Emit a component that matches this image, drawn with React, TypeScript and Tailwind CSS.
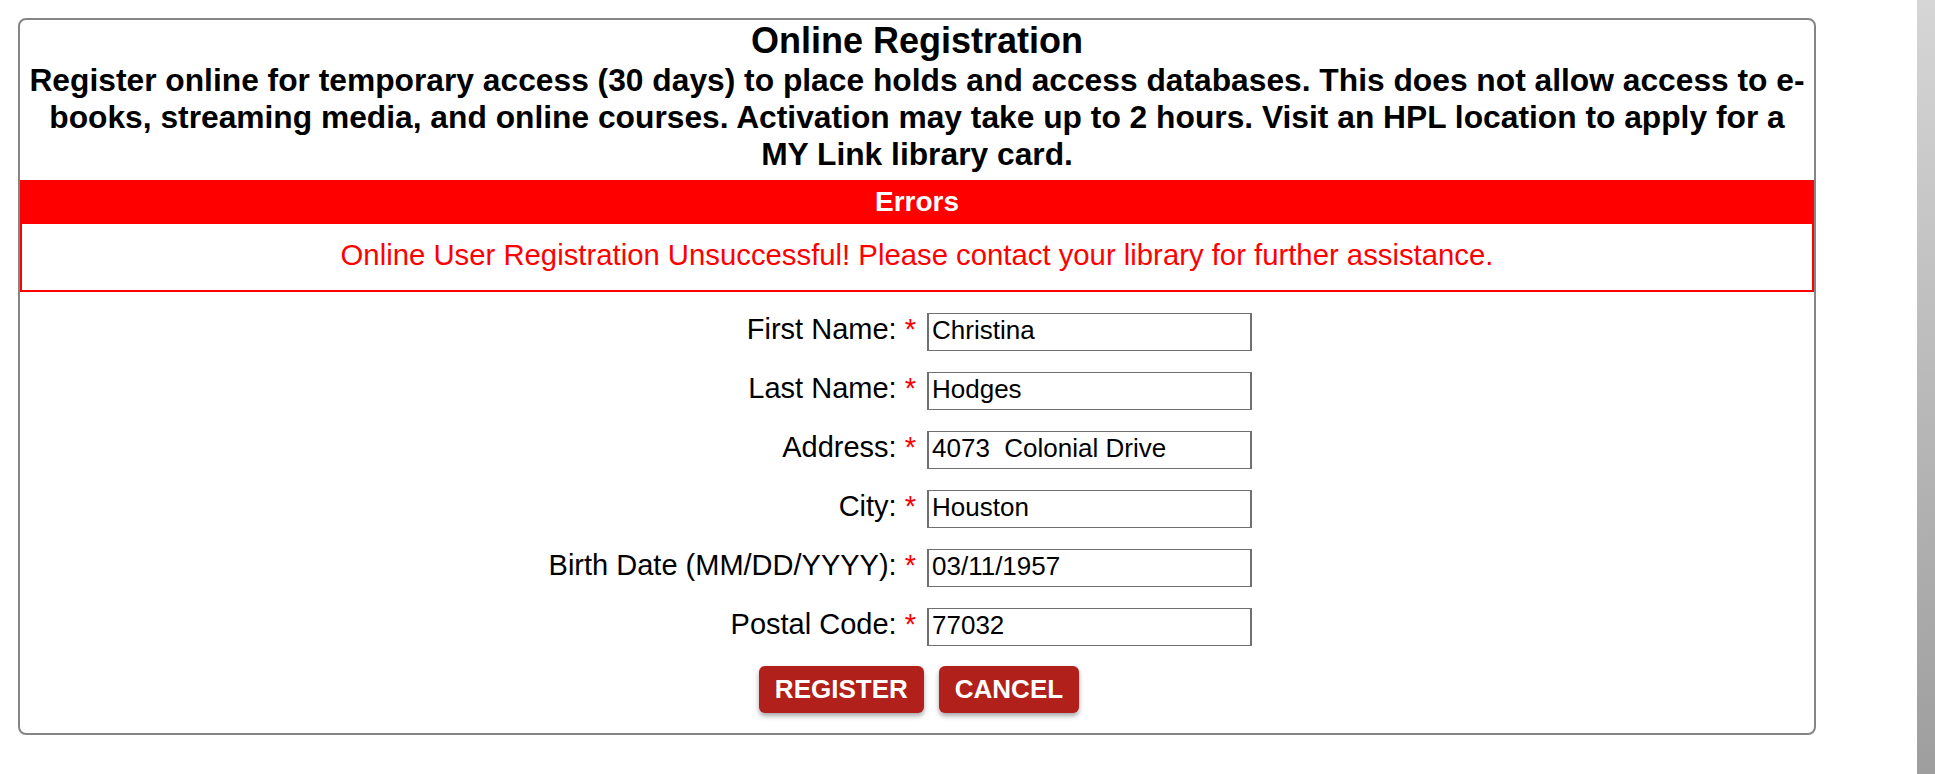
import React from "react";

const fields: { label: string; value: string }[] = [
  { label: "First Name:", value: "Christina" },
  { label: "Last Name:", value: "Hodges" },
  { label: "Address:", value: "4073  Colonial Drive" },
  { label: "City:", value: "Houston" },
  { label: "Birth Date (MM/DD/YYYY):", value: "03/11/1957" },
  { label: "Postal Code:", value: "77032" },
];

export default function App() {
  return (
    <div className="flex min-h-[774px] bg-white font-['Liberation_Sans',Arial,sans-serif] text-black">
      <div className="pl-[18px] pt-[18px]">
        <div className="w-[1798px] rounded-[8px] border-2 border-[#858585] pb-[20px]">
          <h1 className="text-center text-[36px] font-bold leading-[normal]">
            Online Registration
          </h1>
          <p className="text-center text-[31.75px] font-bold leading-[normal]">
            Register online for temporary access (30 days) to place holds and access databases. This does not allow access to e-books, streaming media, and online courses. Activation may take up to 2 hours. Visit an HPL location to apply for a
            <br />
            MY Link library card.
          </p>
          <div className="mt-[7px] flex h-[44px] items-center justify-center bg-[#ff0000] text-[28px] font-bold text-white">
            Errors
          </div>
          <div className="flex h-[68px] items-center justify-center border-x-2 border-b-2 border-[#ff0000] pb-[4px] text-[29.3px] leading-[normal] text-[#ff0000]">
            Online User Registration Unsuccessful! Please contact your library for further assistance.
          </div>
          <div className="mx-auto mt-[21px] flex w-[742px] flex-col gap-[21px]">
            {fields.map((f) => (
              <div key={f.label} className="flex h-[38px] items-center">
                <label className="mb-[6px] w-[370px] text-right text-[29px] leading-[33px]">
                  {f.label} <span className="text-[#ff0000]">*</span>
                </label>
                <input
                  readOnly
                  value={f.value}
                  className="ml-[11px] h-[38px] w-[325px] border-x-2 border-y border-[#707070] bg-white px-[3px] pb-[3px] text-[26px] text-black outline-none"
                />
              </div>
            ))}
          </div>
          <div className="mt-[20px] flex justify-center gap-[15px] pl-[4px]">
            <button className="h-[47px] rounded-[6px] bg-[#b1201a] px-[16px] text-[26px] font-bold text-white shadow-[0_3px_5px_rgba(0,0,0,0.35)]">
              REGISTER
            </button>
            <button className="h-[47px] rounded-[6px] bg-[#b1201a] px-[16px] text-[26px] font-bold text-white shadow-[0_3px_5px_rgba(0,0,0,0.35)]">
              CANCEL
            </button>
          </div>
        </div>
      </div>
      <div className="flex-1" />
      <div className="w-[18px] bg-linear-to-b from-[#d6d6d6] to-[#9e9e9e]" />
    </div>
  );
}
